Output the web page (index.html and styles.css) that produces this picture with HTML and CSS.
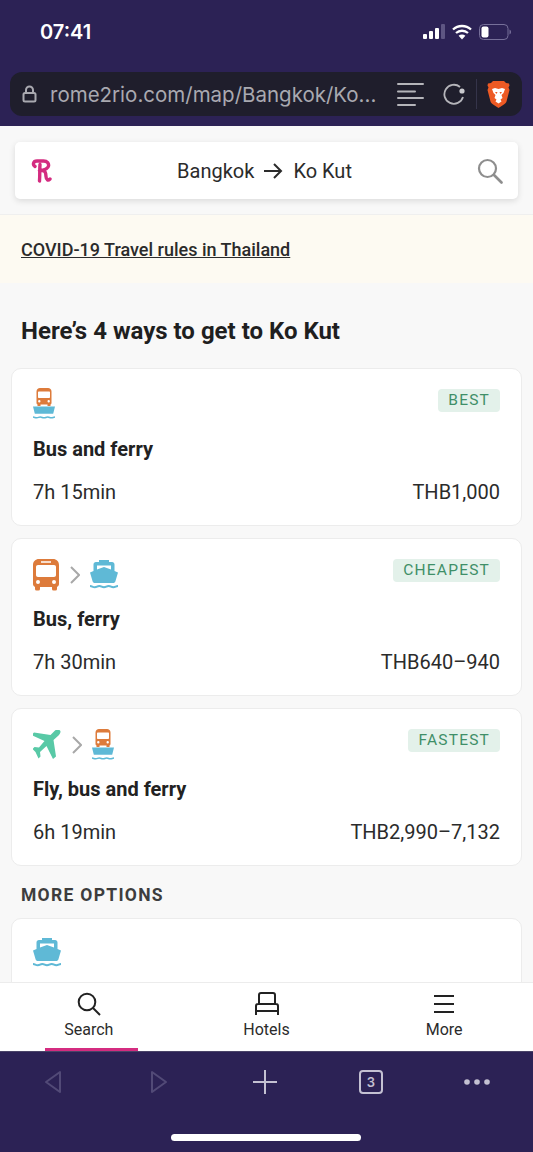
FILE: index.html
```html
<!DOCTYPE html>
<html lang="en">

<head>
    <meta charset="UTF-8">
    <meta name="viewport" content="width=device-width, initial-scale=1.0">
    <title>Bangkok to Ko Kut</title>
    <link rel="stylesheet" href="styles.css">
</head>

<body>
    <svg class="defs" xmlns="http://www.w3.org/2000/svg">
        <symbol id="bus" viewBox="0 0 26 32">
            <path fill="#dd7b3b" fill-rule="evenodd"
                d="M6 0h14c3.500 0 6 2.500 6 6v19c0 1.500-.8 2.400-2 2.800V30a1.500 1.500 0 0 1-1.500 1.500h-2A1.500 1.500 0 0 1 19 30v-2H7v2a1.500 1.500 0 0 1-1.500 1.500h-2A1.500 1.500 0 0 1 2 30v-2.200C.8 27.400 0 26.500 0 25V6c0-3.500 2.500-6 6-6zM8 2.300v1.400h10V2.300zM5 6C3.800 6 3 6.800 3 8v8c0 1.200.8 2 2 2h16c1.200 0 2-.8 2-2V8c0-1.200-.8-2-2-2zM5 21a2 2 0 1 0 0 4 2 2 0 0 0 0-4zm16 0a2 2 0 1 0 0 4 2 2 0 0 0 0-4z" />
        </symbol>
        <symbol id="ferry" viewBox="0 0 28 31">
            <path fill="#5fb9d6" fill-rule="evenodd"
                d="M9 0h10v2h3c1.500 0 2.500 1 2.500 2.500V11l3.500 1.500-2.500 8.500c-.4 1.500-1.200 2-2.500 2H5c-1.300 0-2.100-.5-2.500-2L0 12.500 3.500 11V4.500C3.500 3 4.500 2 6 2h3zM7 5.500V9.500L14 7l7 2.500v-4z" />
            <path fill="none" stroke="#5fb9d6" stroke-width="2" d="M0 26c2.300 0 2.300 1.200 4.700 1.200S7 26 9.300 26s2.400 1.200 4.700 1.200 2.300-1.200 4.700-1.200 2.300 1.200 4.600 1.200S25.700 26 28 26" />
        </symbol>
        <symbol id="busferry" viewBox="0 0 22 31">
            <path fill="#dd7b3b" fill-rule="evenodd"
                d="M7 0h8c2 0 3.500 1.500 3.500 3.500V15c0 .8-.4 1.300-1 1.500V18h-3v-1.400h-7V18h-3v-1.500c-.6-.2-1-.7-1-1.500V3.500C3.500 1.500 5 0 7 0zM6 3.500c-.6 0-1 .4-1 1V9c0 .6.4 1 1 1h10c.6 0 1-.4 1-1V4.500c0-.6-.4-1-1-1zM6.300 12a1.200 1.200 0 1 0 0 2.400 1.200 1.200 0 0 0 0-2.400zm9.400 0a1.200 1.200 0 1 0 0 2.400 1.200 1.200 0 0 0 0-2.400z" />
            <path fill="#5fb9d6" d="M0 18.500h22l-1.800 7.200H1.800z" />
            <path fill="none" stroke="#5fb9d6" stroke-width="1.600" d="M0 29c1.800 0 1.800.8 3.700.8s1.800-.8 3.600-.8 1.900.8 3.700.8 1.800-.8 3.700-.8 1.800.8 3.600.8 1.900-.8 3.700-.8" />
        </symbol>
        <symbol id="chevron" viewBox="0 0 10 18">
            <path fill="none" stroke="#a8a8a8" stroke-width="2" d="M1 1l8 8-8 8" />
        </symbol>
    </svg>

    <div class="phone">
        <header class="chrome-top">
            <div class="status">
                <span class="clock">07:41</span>
                <div class="status-icons">
                    <svg width="22" height="16" viewBox="0 0 22 16">
                        <rect x="0" y="10" width="4" height="5" rx="1" fill="#fff" />
                        <rect x="6" y="7" width="4" height="8" rx="1" fill="#fff" />
                        <rect x="12" y="4" width="4" height="11" rx="1" fill="#fff" />
                        <rect x="18" y="0" width="4" height="15" rx="1" fill="#5e5683" />
                    </svg>
                    <svg width="20" height="16" viewBox="0 0 20 16">
                        <path fill="none" stroke="#fff" stroke-width="2.300" d="M1 5.500c5-4.700 13-4.700 18 0M4 9c3.400-3 8.600-3 12 0" />
                        <path fill="#fff" d="M10 15.500l-3.400-3.700c2-1.600 4.800-1.600 6.800 0z" />
                    </svg>
                    <svg width="32" height="16" viewBox="0 0 32 16">
                        <rect x=".5" y=".5" width="28.500" height="15" rx="4" fill="none" stroke="#77709a" />
                        <rect x="2.500" y="2.500" width="7" height="11" rx="2" fill="#fff" />
                        <path fill="#77709a" d="M30.500 5.500c1 .4 1.500 1.300 1.500 2.500s-.5 2.100-1.500 2.500z" />
                    </svg>
                </div>
            </div>
            <div class="urlbar">
                <svg class="lock" width="15" height="18" viewBox="0 0 15 18">
                    <path fill="none" stroke="#a9a9b0" stroke-width="2" d="M4 8V5a3.500 3.500 0 0 1 7 0v3" />
                    <rect x="1.500" y="8" width="12" height="8.500" rx="1.500" fill="none" stroke="#a9a9b0" stroke-width="2" />
                </svg>
                <span class="url">rome2rio.com/map/Bangkok/Ko...</span>
                <svg class="reader" width="28" height="24" viewBox="0 0 28 24">
                    <path stroke="#b5b5ba" stroke-width="2" stroke-linecap="round" d="M1 2h25M1 9.500h17M1 16h25M1 23h17" />
                </svg>
                <svg class="reload" width="22" height="22" viewBox="0 0 22 22">
                    <path fill="none" stroke="#b5b5ba" stroke-width="1.800" d="M20 14a9.500 9.500 0 1 1-3-10" />
                    <circle cx="19" cy="8" r="2.600" fill="#c9c9cd" />
                </svg>
                <span class="url-sep"></span>
                <svg class="brave" width="23" height="27" viewBox="0 0 23 27">
                    <path fill="#ee5a24" d="M6 0h11l2 2 3 .5.500 2-1 2 1 2.500-3 11.500c-.5 1.500-1.500 2.200-3 3.200L11.500 27l-5-3.300c-1.500-1-2.500-1.700-3-3.200L.5 9l1-2.500-1-2L1 2.500 4 2z" />
                    <path fill="#fff" d="M5 8l3-1 3.500 1L15 7l3 1-1.500 4-2 2 1 3-2 1.500 1 2-3 2-3-2 1-2L7.500 17l1-3-2-2z" />
                    <path fill="#ee5a24" d="M8 11h2.500l-1 2zM15 11h-2.500l1 2z" />
                </svg>
            </div>
        </header>

        <div class="scroll">
            <div class="search-wrap">
                <div class="search-card">
                    <svg class="logo" width="21" height="24" viewBox="0 0 21 24">
                        <path fill="none" stroke="#d42c80" stroke-width="3.400" stroke-linecap="round" stroke-linejoin="round"
                            d="M4 7.500C1.500 6 2 2 6 2h6.500c4 0 5.500 2.500 5 5-.5 3-4 4-9 4.500M9 5.500C8.500 11 9 16 8.500 22M11 11.500c3.500 0 3.800 2.500 4 6 .2 3.500 2 4.500 4 2.500" />
                    </svg>
                    <div class="route">
                        <span>Bangkok</span>
                        <svg width="19" height="16" viewBox="0 0 19 16">
                            <path fill="none" stroke="#2b2b2b" stroke-width="2" d="M0 8h17M10 1l7 7-7 7" />
                        </svg>
                        <span>Ko Kut</span>
                    </div>
                    <svg class="search-icon" width="26" height="26" viewBox="0 0 26 26">
                        <circle cx="10.500" cy="10.500" r="8.500" fill="none" stroke="#8e8e8e" stroke-width="2.200" />
                        <path stroke="#8e8e8e" stroke-width="2.600" stroke-linecap="round" d="M17 17l7.500 7.500" />
                    </svg>
                </div>
            </div>

            <div class="banner"><a class="banner-link">COVID-19 Travel rules in Thailand</a></div>

            <h1 class="heading">Here’s 4 ways to get to Ko Kut</h1>

            <div class="cards">
                <div class="card">
                    <div class="card-top">
                        <div class="modes">
                            <svg class="ic-busferry" width="22" height="31"><use href="#busferry" /></svg>
                        </div>
                        <span class="tag">BEST</span>
                    </div>
                    <div class="card-title">Bus and ferry</div>
                    <div class="card-bottom"><span>7h 15min</span><span>THB1,000</span></div>
                </div>
                <div class="card">
                    <div class="card-top">
                        <div class="modes">
                            <svg width="26" height="32"><use href="#bus" /></svg>
                            <svg class="ic-chevron" width="10" height="18"><use href="#chevron" /></svg>
                            <svg width="28" height="31"><use href="#ferry" /></svg>
                        </div>
                        <span class="tag">CHEAPEST</span>
                    </div>
                    <div class="card-title">Bus, ferry</div>
                    <div class="card-bottom"><span>7h 30min</span><span>THB640–940</span></div>
                </div>
                <div class="card">
                    <div class="card-top">
                        <div class="modes">
                            <svg width="28" height="30" viewBox="0 0 28 30">
                                <path fill="#58c9a6" d="M27 .5c1 1 .5 3-1.500 5L20.500 10l2.500 16.500-3 2.500-6.500-13-6.500 6 .5 4.500-2 2-3-6.500L-.5 19l2-2 4.500.5 5.500-6.500L-1.500 5 1 2.500l16.500 2.500L22 .5c2-1.500 4-1 5 0z" />
                            </svg>
                            <svg class="ic-chevron" width="10" height="18"><use href="#chevron" /></svg>
                            <svg width="22" height="31"><use href="#busferry" /></svg>
                        </div>
                        <span class="tag">FASTEST</span>
                    </div>
                    <div class="card-title">Fly, bus and ferry</div>
                    <div class="card-bottom"><span>6h 19min</span><span>THB2,990–7,132</span></div>
                </div>
            </div>

            <div class="more-label">MORE OPTIONS</div>
            <div class="card card-cut">
                <div class="modes">
                    <svg width="28" height="31"><use href="#ferry" /></svg>
                </div>
            </div>
        </div>

        <nav class="tabs">
            <div class="tab tab-active">
                <svg width="24" height="24" viewBox="0 0 24 24">
                    <circle cx="10" cy="10" r="8.300" fill="none" stroke="#222" stroke-width="2" />
                    <path stroke="#222" stroke-width="2" d="M16 16l7 7" />
                </svg>
                <span>Search</span>
            </div>
            <div class="tab">
                <svg width="24" height="24" viewBox="0 0 24 24">
                    <path fill="none" stroke="#222" stroke-width="2" d="M4 12V3a2 2 0 0 1 2-2h12a2 2 0 0 1 2 2v9M1 23V14a2 2 0 0 1 2-2h18a2 2 0 0 1 2 2v9M1 19h22" />
                </svg>
                <span>Hotels</span>
            </div>
            <div class="tab">
                <svg width="24" height="24" viewBox="0 0 24 24">
                    <path stroke="#222" stroke-width="2" d="M2 4h20M2 12h20M2 20h20" />
                </svg>
                <span>More</span>
            </div>
        </nav>

        <footer class="chrome-bottom">
            <div class="toolbar">
                <svg width="18" height="24" viewBox="0 0 18 24">
                    <path fill="none" stroke="#524a77" stroke-width="2" stroke-linejoin="round" d="M16 2v20L2 12z" />
                </svg>
                <svg width="18" height="24" viewBox="0 0 18 24">
                    <path fill="none" stroke="#524a77" stroke-width="2" stroke-linejoin="round" d="M2 2v20l14-10z" />
                </svg>
                <svg width="26" height="26" viewBox="0 0 26 26">
                    <path stroke="#c4c1d2" stroke-width="2" d="M13 1v24M1 13h24" />
                </svg>
                <span class="tab-count">3</span>
                <svg width="26" height="6" viewBox="0 0 26 6">
                    <circle cx="3" cy="3" r="2.800" fill="#c4c1d2" />
                    <circle cx="13" cy="3" r="2.800" fill="#c4c1d2" />
                    <circle cx="23" cy="3" r="2.800" fill="#c4c1d2" />
                </svg>
            </div>
            <div class="home-bar"></div>
        </footer>
    </div>
</body>

</html>
```

FILE: styles.css
```css
* {
    box-sizing: border-box;
}

body {
    margin: 0;
    font-family: Roboto, "Liberation Sans", sans-serif;
    color: #222;
    background: #2c2255;
}

.defs {
    display: none;
}

.phone {
    display: flex;
    flex-direction: column;
    width: 533px;
    height: 1152px;
    overflow: hidden;
}

/* browser chrome, top */
.chrome-top {
    flex: none;
    height: 126px;
    padding: 0 11px 0 10px;
    background: #2c2255;
}

.status {
    display: flex;
    align-items: center;
    justify-content: space-between;
    height: 72px;
    padding: 0 11px 8px 30px;
}

.clock {
    font-family: Inter, Roboto, sans-serif;
    font-size: 20px;
    font-weight: 600;
    color: #fff;
}

.status-icons {
    display: flex;
    align-items: center;
    gap: 7px;
}

.urlbar {
    display: flex;
    align-items: center;
    height: 44px;
    padding: 0 12px;
    background: #1f1e2c;
    border-radius: 12px;
}

.lock {
    flex: none;
}

.url {
    flex: 1;
    margin-left: 13px;
    font-family: Inter, Roboto, sans-serif;
    font-size: 20.500px;
    color: #a9a9b0;
    white-space: nowrap;
}

.reader {
    flex: none;
    margin-right: 18px;
}

.reload {
    flex: none;
    margin-right: 11px;
}

.url-sep {
    flex: none;
    width: 1px;
    height: 30px;
    margin-right: 10px;
    background: #35344a;
}

.brave {
    flex: none;
}

/* page */
.scroll {
    flex: 1;
    min-height: 0;
    overflow: hidden;
    background: #f8f8f8;
}

.search-wrap {
    height: 89px;
    padding: 16px 15px 0;
    border-bottom: 1px solid #efefef;
}

.search-card {
    display: flex;
    align-items: center;
    justify-content: space-between;
    height: 57px;
    padding: 0 15px 0 16px;
    background: #fff;
    border-radius: 5px;
    box-shadow: 0 2px 6px rgba(0, 0, 0, .12);
}

.route {
    display: flex;
    align-items: center;
    gap: 10px;
    font-size: 20px;
    color: #2b2b2b;
}

.banner {
    display: flex;
    align-items: center;
    height: 68px;
    padding: 0 21px;
    background: #fdfaf2;
}

.banner-link {
    font-size: 18px;
    font-weight: 500;
    color: #2b2b2b;
    text-decoration: underline;
}

.heading {
    margin: 0;
    padding: 33px 21px 22px;
    font-size: 24px;
    line-height: 30px;
    font-weight: 700;
    color: #1f1f1f;
}

.cards {
    display: flex;
    flex-direction: column;
    gap: 12px;
}

.card {
    height: 158px;
    margin: 0 11px;
    padding: 20px 21px 0;
    background: #fff;
    border: 1px solid #ececec;
    border-radius: 10px;
}

.card-top {
    display: flex;
    align-items: flex-start;
    justify-content: space-between;
    height: 32px;
}

.modes {
    display: flex;
    align-items: center;
    gap: 10px;
}

.ic-chevron {
    margin: 0 0 0 1px;
}

.ic-busferry {
    margin-top: -1px;
}

.tag {
    height: 23px;
    margin-top: 0;
    padding: 0 10px;
    font-size: 15.500px;
    line-height: 23px;
    letter-spacing: 1.200px;
    color: #3f8f68;
    background: #e3f1ea;
    border-radius: 4px;
}

.card-title {
    margin-top: 15px;
    font-size: 20px;
    line-height: 26px;
    font-weight: 700;
    color: #222;
}

.card-bottom {
    display: flex;
    justify-content: space-between;
    margin-top: 17px;
    font-size: 20px;
    line-height: 26px;
    color: #2b2b2b;
}

.more-label {
    padding: 18px 21px 12px;
    font-size: 17.500px;
    line-height: 22px;
    font-weight: 700;
    letter-spacing: 1.300px;
    color: #3d3d3d;
}

.card-cut {
    padding-top: 19px;
}

/* bottom tabs */
.tabs {
    position: relative;
    flex: none;
    display: flex;
    height: 69px;
    padding: 0;
    background: #fff;
    border-top: 1px solid #ececec;
}

.tab {
    position: relative;
    display: flex;
    flex-direction: column;
    align-items: center;
    gap: 4px;
    width: 178px;
    padding-top: 9px;
    font-size: 16px;
    line-height: 20px;
    color: #2b2b2b;
}

.tab-active::after {
    content: "";
    position: absolute;
    bottom: 0;
    left: 45px;
    width: 93px;
    height: 3px;
    background: #d42c80;
}

/* browser chrome, bottom */
.chrome-bottom {
    flex: none;
    height: 101px;
    padding-top: 17px;
    background: #2c2255;
    border-top: 1px solid #4a4468;
}

.toolbar {
    display: grid;
    grid-template-columns: repeat(5, 106px);
    justify-items: center;
    align-items: center;
    height: 24px;
    padding-left: 0;
}

.tab-count {
    width: 24px;
    height: 24px;
    font-family: Inter, Roboto, sans-serif;
    font-size: 13px;
    font-weight: 600;
    line-height: 21px;
    text-align: center;
    color: #c4c1d2;
    border: 2px solid #c4c1d2;
    border-radius: 4px;
}

.home-bar {
    width: 190px;
    height: 7px;
    margin: 41px auto 0 171px;
    background: #fff;
    border-radius: 4px;
}
```
